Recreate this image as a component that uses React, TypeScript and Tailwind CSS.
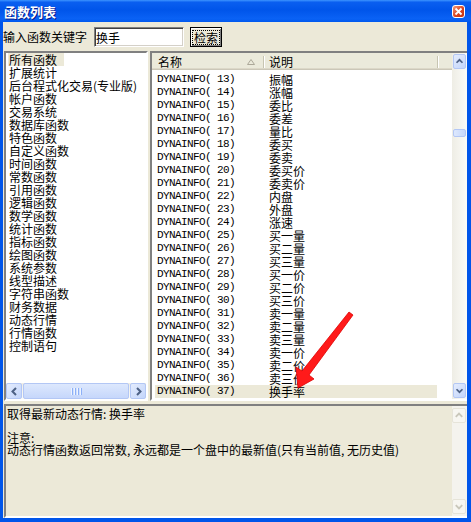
import clsx from "clsx";

type Dir = "up" | "down" | "left" | "right";

const leftItems = [
  "所有函数",
  "扩展统计",
  "后台程式化交易(专业版)",
  "帐户函数",
  "交易系统",
  "数据库函数",
  "特色函数",
  "自定义函数",
  "时间函数",
  "常数函数",
  "引用函数",
  "逻辑函数",
  "数学函数",
  "统计函数",
  "指标函数",
  "绘图函数",
  "系统参数",
  "线型描述",
  "字符串函数",
  "财务数据",
  "动态行情",
  "行情函数",
  "控制语句",
];

const rows: [number, string][] = [
  [13, "振幅"],
  [14, "涨幅"],
  [15, "委比"],
  [16, "委差"],
  [17, "量比"],
  [18, "委买"],
  [19, "委卖"],
  [20, "委买价"],
  [21, "委卖价"],
  [22, "内盘"],
  [23, "外盘"],
  [24, "涨速"],
  [25, "买一量"],
  [26, "买二量"],
  [27, "买三量"],
  [28, "买一价"],
  [29, "买二价"],
  [30, "买三价"],
  [31, "卖一量"],
  [32, "卖二量"],
  [33, "卖三量"],
  [34, "卖一价"],
  [35, "卖二价"],
  [36, "卖三价"],
  [37, "换手率"],
];

function Chevron({ dir, disabled }: { dir: Dir; disabled?: boolean }) {
  const pts = {
    up: "3,8 6.5,4.5 10,8",
    down: "3,5 6.5,8.5 10,5",
    left: "8,3 4.5,6.5 8,10",
    right: "5,3 8.5,6.5 5,10",
  }[dir];
  return (
    <svg width="13" height="13" viewBox="0 0 13 13">
      <polyline points={pts} fill="none" stroke={disabled ? "#c9c7ba" : "#4d6185"} strokeWidth="2" />
    </svg>
  );
}

function ScrollBtn({ dir, disabled, className }: { dir: Dir; disabled?: boolean; className?: string }) {
  return (
    <div
      className={clsx(
        "flex items-center justify-center rounded-[2px] border shrink-0",
        disabled
          ? "border-[#e6e4d9] bg-[#f7f6f1]"
          : "border-[#b3c7f5] bg-[linear-gradient(135deg,#e4ecfd,#c3d5fb)]",
        className
      )}
    >
      <Chevron dir={dir} disabled={disabled} />
    </div>
  );
}

export default function App() {
  return (
    <div className="relative w-[471px] h-[522px] overflow-hidden bg-[#0055ea] flex flex-col text-[12px] text-black font-['Noto_Sans_CJK_SC',sans-serif]">
      {/* Title bar */}
      <div className="h-[22px] shrink-0 flex items-center justify-between pl-[4px] pr-[6px] bg-[linear-gradient(to_bottom,#3d95ff_0%,#0a5ff0_10%,#0055ea_45%,#0a62f5_85%,#0058ee_100%)]">
        <span className="text-white font-bold text-[13px] leading-none [text-shadow:1px_1px_0_#0a1a8a]">函数列表</span>
        <div className="w-[13px] h-[13px] rounded-[3px] border border-white bg-[linear-gradient(135deg,#f39b7c,#d9431f_55%,#c2330f)] flex items-center justify-center">
          <svg width="9" height="9" viewBox="0 0 9 9">
            <path d="M1.5 1.5 L7.5 7.5 M7.5 1.5 L1.5 7.5" stroke="white" strokeWidth="1.8" />
          </svg>
        </div>
      </div>

      {/* Client area */}
      <div className="flex-1 ml-[3px] mr-[4px] mb-[4px] bg-[#ece9d8] flex flex-col">
        {/* Search row */}
        <div className="flex items-center h-[20px] mt-[5px]">
          <span className="leading-[20px]">输入函数关键字</span>
          <input
            defaultValue="换手"
            className="ml-[7px] w-[90px] h-[20px] bg-white pl-[1px] outline-none border border-t-[#808080] border-l-[#808080] border-b-white border-r-white shadow-[inset_1px_1px_0_#404040,inset_-1px_-1px_0_#d4d0c8]"
          />
          <button className="ml-[6px] w-[32px] h-[20px] border border-black bg-[#ece9d8] p-0 flex">
            <span className="flex-1 flex items-center justify-center shadow-[inset_1px_1px_0_#ffffff,inset_-1px_-1px_0_#808080]">
              <span className="outline outline-1 outline-dotted outline-black px-[1px] leading-[13px]">检索</span>
            </span>
          </button>
        </div>

        {/* Lists */}
        <div className="flex mt-[4px] h-[350px]">
          {/* Category list */}
          <div className="ml-[1px] w-[144px] flex flex-col bg-white border-2 border-t-[#808080] border-l-[#808080] border-r-white border-b-white">
            <div className="flex-1 overflow-hidden">
              {leftItems.map((item, i) => (
                <div key={item} className="h-[13px] leading-[13px] whitespace-nowrap">
                  <span className={clsx("inline-block", i === 0 ? "ml-[2px] pl-[1px] pr-[7px] bg-[#ece9d8]" : "ml-[3px]")}>
                    {item}
                  </span>
                </div>
              ))}
            </div>
            <div className="h-[16px] flex bg-[linear-gradient(to_bottom,#eeede5,#fbfbf8)]">
              <ScrollBtn dir="left" className="w-[16px] h-[16px]" />
              <div className="flex-1 mx-[1px] rounded-[2px] border border-[#b3c7f5] bg-[linear-gradient(to_bottom,#dde8fd,#c6d7fb)] flex items-center justify-center gap-[1px]">
                {[0, 1, 2, 3].map((g) => (
                  <span key={g} className="w-[1px] h-[7px] bg-[#eef4fe] shadow-[1px_0_0_#8cb0f8] mr-[1px]" />
                ))}
              </div>
              <ScrollBtn dir="right" className="w-[16px] h-[16px]" />
            </div>
          </div>

          {/* Function list view */}
          <div className="ml-[2px] flex-1 flex bg-white border-t-2 border-l-2 border-b-2 border-t-[#808080] border-l-[#808080] border-b-white">
            <div className="flex-1 flex flex-col overflow-hidden">
              <div className="h-[17px] shrink-0 flex items-center bg-[#ebeadb] shadow-[inset_0_-1px_0_#cbc7b8,inset_0_-2px_0_#dcd8c8]">
                <div className="w-[111px] pl-[6px] pr-[8px] flex items-center justify-between">
                  <span className="leading-[13px]">名称</span>
                  <svg width="8" height="6" viewBox="0 0 8 6">
                    <polygon points="0.5,5.5 4,0.5 7.5,5.5" fill="none" stroke="#aca899" />
                  </svg>
                </div>
                <span className="w-[1px] h-[12px] bg-[#c7c5b2]" />
                <span className="w-[1px] h-[12px] bg-white" />
                <div className="w-[172px] pl-[4px] leading-[13px]">说明</div>
                <span className="w-[1px] h-[12px] bg-[#c7c5b2]" />
                <span className="w-[1px] h-[12px] bg-white" />
              </div>
              <div className="pt-[3px]">
                {rows.map(([n, desc]) => (
                  <div
                    key={n}
                    className={clsx("ml-[3px] w-[282px] h-[13px] flex items-center", n === 37 && "bg-[#ece9d8]")}
                  >
                    <span className="w-[112px] pl-[2px] whitespace-pre font-['Liberation_Mono',monospace] text-[11px] tracking-[-0.6px] leading-[13px]">
                      {`DYNAINFO( ${n})`}
                    </span>
                    <span className="pl-[2px] leading-[13px]">{desc}</span>
                  </div>
                ))}
              </div>
            </div>
            <div className="w-[15px] flex flex-col p-[1px] bg-[linear-gradient(to_right,#eeede5,#fbfbf8)]">
              <ScrollBtn dir="up" className="h-[15px] w-full" />
              <div className="h-[60px] shrink-0" />
              <div className="h-[8px] shrink-0 rounded-[2px] border border-[#b3c7f5] bg-[linear-gradient(to_right,#dde8fd,#c6d7fb)]" />
              <div className="flex-1" />
              <ScrollBtn dir="down" className="h-[15px] w-full" />
            </div>
          </div>
        </div>

        {/* Description */}
        <div className="mt-[3px] ml-[1px] flex-1 flex bg-[#ece9d8] border-t-2 border-l-2 border-b-2 border-t-[#808080] border-l-[#808080] border-b-white">
          <div className="flex-1 pl-[1px] pt-[2px] leading-[12px] whitespace-nowrap">
            <div className="h-[12px]">取得最新动态行情: 换手率</div>
            <div className="h-[12px]" />
            <div className="h-[12px]">注意:</div>
            <div className="h-[12px]">动态行情函数返回常数, 永远都是一个盘中的最新值(只有当前值, 无历史值)</div>
          </div>
          <div className="w-[15px] flex flex-col py-[2px] bg-[#f4f3ee]">
            <ScrollBtn dir="up" disabled className="h-[15px] w-[14px]" />
            <div className="flex-1" />
            <ScrollBtn dir="down" disabled className="h-[15px] w-[14px]" />
          </div>
        </div>
      </div>

      {/* Red annotation arrow */}
      <svg className="absolute left-0 top-0 pointer-events-none" width="471" height="522" viewBox="0 0 471 522">
        <polygon
          points="349,312 353,315 309,375 314,379 298,388 296,367 302,371"
          fill="#ff1a1a"
          stroke="#dd0000"
          strokeWidth="0.8"
          strokeLinejoin="round"
        />
      </svg>
    </div>
  );
}
